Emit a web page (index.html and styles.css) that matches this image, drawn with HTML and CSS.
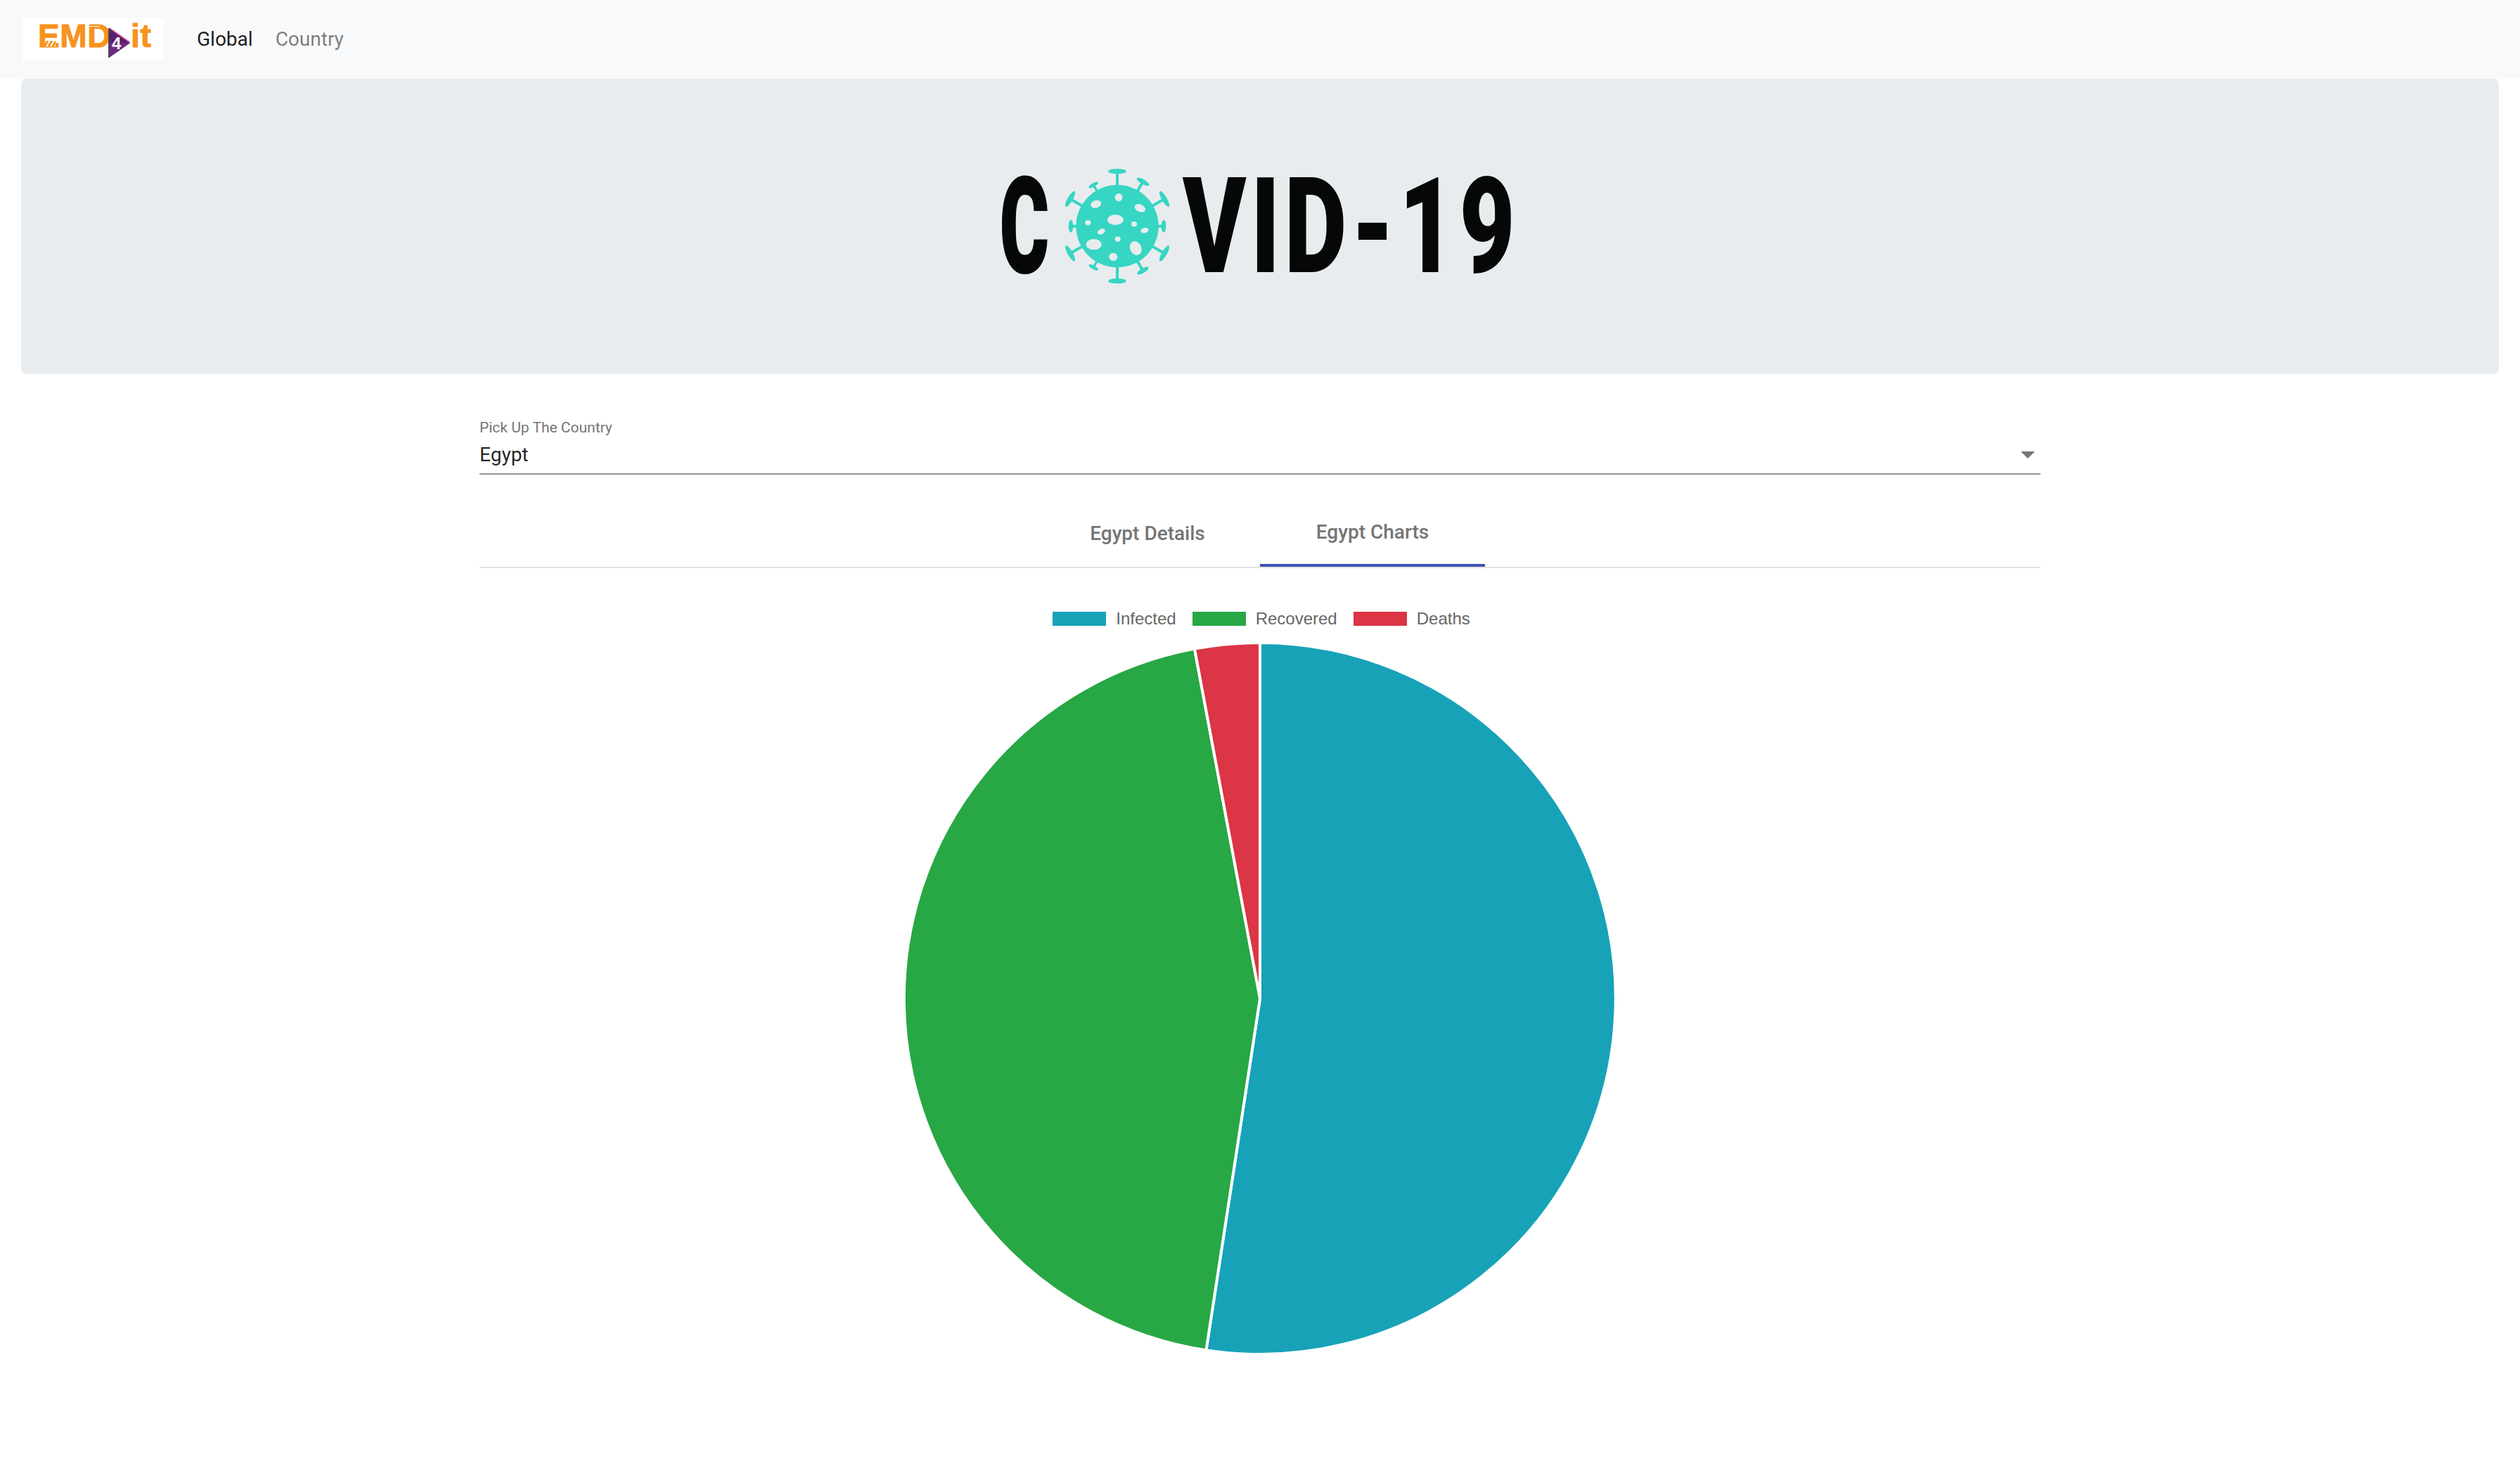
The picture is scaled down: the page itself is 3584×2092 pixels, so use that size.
FILE: index.html
```html
<!DOCTYPE html>
<html lang="en">
<head>
<meta charset="utf-8">
<title>COVID-19</title>
<link rel="stylesheet" href="styles.css">
</head>
<body>
<nav class="navbar">
  <a class="brand">
    <span class="brand-word">EMD</span>
    <svg class="brand-play" viewBox="0 0 32 44">
      <polygon points="1,1 31,22 1,43" fill="#5b1f6d"/>
      <polygon points="1,22 31,22 1,43" fill="#6d2a80"/>
      <line x1="2" y1="1" x2="31" y2="21" stroke="#e05aa0" stroke-width="1.4"/>
      <line x1="1" y1="1" x2="1" y2="43" stroke="#44484c" stroke-width="2"/>
      <text x="5" y="31" class="brand-four">4</text>
    </svg>
    <span class="brand-word">it</span>
    <span class="brand-slashes"></span>
    <span class="brand-streak"></span>
  </a>
  <a class="nav-link nav-active">Global</a>
  <a class="nav-link">Country</a>
</nav>

<header class="jumbotron">
  <div class="covid">
    <span class="covid-text covid-c">C</span>
    <svg class="virus" viewBox="100 60 456 492">
      <g class="virus-fill">
        <circle cx="328" cy="305" r="176"/>
        <g transform="rotate(0 328 305)"><rect x="322" y="75" width="12" height="70"/><ellipse cx="328" cy="71" rx="38" ry="11"/></g>
        <g transform="rotate(30 328 305)"><rect x="322" y="90" width="12" height="60"/><ellipse cx="328" cy="86" rx="30" ry="10"/></g>
        <g transform="rotate(60 328 305)"><rect x="322" y="78" width="12" height="70"/><ellipse cx="328" cy="73" rx="38" ry="11"/></g>
        <g transform="rotate(90 328 305)"><rect x="322" y="110" width="12" height="40"/><ellipse cx="328" cy="107" rx="27" ry="10"/></g>
        <g transform="rotate(120 328 305)"><rect x="322" y="78" width="12" height="70"/><ellipse cx="328" cy="73" rx="38" ry="11"/></g>
        <g transform="rotate(150 328 305)"><rect x="322" y="90" width="12" height="60"/><ellipse cx="328" cy="86" rx="28" ry="10"/></g>
        <g transform="rotate(180 328 305)"><rect x="322" y="75" width="12" height="70"/><ellipse cx="328" cy="71" rx="38" ry="11"/></g>
        <g transform="rotate(210 328 305)"><rect x="323" y="104" width="10" height="50"/><ellipse cx="328" cy="102" rx="23" ry="8"/></g>
        <g transform="rotate(240 328 305)"><rect x="322" y="78" width="12" height="70"/><ellipse cx="328" cy="73" rx="38" ry="11"/></g>
        <g transform="rotate(270 328 305)"><rect x="322" y="110" width="12" height="40"/><ellipse cx="328" cy="107" rx="27" ry="10"/></g>
        <g transform="rotate(300 328 305)"><rect x="322" y="78" width="12" height="70"/><ellipse cx="328" cy="73" rx="38" ry="11"/></g>
        <g transform="rotate(330 328 305)"><rect x="323" y="104" width="10" height="50"/><ellipse cx="328" cy="102" rx="23" ry="8"/></g>
      </g>
      <g class="virus-hole">
        <ellipse cx="334" cy="182" rx="16" ry="17"/>
        <ellipse cx="237" cy="211" rx="23" ry="16" transform="rotate(-15 237 211)"/>
        <ellipse cx="425" cy="228" rx="24" ry="16" transform="rotate(25 425 228)"/>
        <ellipse cx="320" cy="278" rx="34" ry="22"/>
        <ellipse cx="203" cy="290" rx="12" ry="11"/>
        <ellipse cx="400" cy="296" rx="12" ry="11"/>
        <ellipse cx="445" cy="323" rx="17" ry="11" transform="rotate(-15 445 323)"/>
        <ellipse cx="260" cy="328" rx="17" ry="11" transform="rotate(-25 260 328)"/>
        <ellipse cx="330" cy="360" rx="12" ry="11"/>
        <ellipse cx="228" cy="383" rx="33" ry="23"/>
        <ellipse cx="407" cy="399" rx="24" ry="31" transform="rotate(-25 407 399)"/>
        <ellipse cx="311" cy="436" rx="18" ry="17"/>
      </g>
    </svg>
    <span class="covid-text covid-rest">VID-19</span>
  </div>
</header>

<main class="content">
  <div class="field">
    <label class="field-label">Pick Up The Country</label>
    <div class="field-input">
      <span class="field-value">Egypt</span>
      <span class="field-arrow"></span>
    </div>
  </div>

  <div class="tabs">
    <button class="tab">Egypt Details</button>
    <button class="tab tab-active">Egypt Charts</button>
  </div>

  <ul class="legend">
    <li class="legend-item"><span class="swatch swatch-infected"></span>Infected</li>
    <li class="legend-item"><span class="swatch swatch-recovered"></span>Recovered</li>
    <li class="legend-item"><span class="swatch swatch-deaths"></span>Deaths</li>
  </ul>

  <svg class="pie" viewBox="-506 -506 1012 1012">
    <path class="slice slice-infected" d="M0 0 L0 -506 A506 506 0 1 1 -76.6 500.2 Z"/>
    <path class="slice slice-recovered" d="M0 0 L-76.6 500.2 A506 506 0 0 1 -93.1 -497.4 Z"/>
    <path class="slice slice-deaths" d="M0 0 L-93.1 -497.4 A506 506 0 0 1 0 -506 Z"/>
  </svg>
</main>
</body>
</html>
```
FILE: styles.css
```css
* { box-sizing: border-box; }
html, body { margin: 0; padding: 0; background: #fff; }
body { font-family: Roboto, "Liberation Sans", sans-serif; height: 2092px; overflow: hidden; }

.navbar {
  height: 112px;
  background: #f8f9fa;
  display: flex;
  align-items: center;
  padding-left: 32px;
}
.brand {
  position: relative;
  width: 200px;
  height: 60px;
  background: #fff;
  display: flex;
  align-items: flex-start;
  padding: 0 0 0 22px;
  margin-right: 48px;
}
.brand-word {
  font-family: "Liberation Sans", sans-serif;
  font-weight: 700;
  font-size: 46px;
  line-height: 50px;
  height: 50px;
  color: #f7931e;
  -webkit-text-stroke: 1px #f7931e;
  letter-spacing: 0.6px;
}
.brand-play {
  width: 32px;
  height: 44px;
  margin: 13px 0 0 -4px;
  flex: none;
}
.brand-four {
  font-family: "Liberation Sans", sans-serif;
  font-weight: 700;
  font-size: 24px;
  fill: #fff;
}
.brand-slashes {
  position: absolute;
  left: 32px;
  top: 32px;
  width: 15px;
  height: 8px;
  background: repeating-linear-gradient(120deg, #fff 0 2px, #f7931e 2px 5px);
}
.brand-streak {
  position: absolute;
  left: 90px;
  top: 11px;
  width: 20px;
  height: 1px;
  background: #fff;
}
.nav-link {
  font-size: 28px;
  line-height: 40px;
  color: rgba(0, 0, 0, 0.5);
  margin-right: 32px;
}
.nav-active { color: rgba(0, 0, 0, 0.9); }

.jumbotron {
  height: 420px;
  margin: 0 30px;
  background: #e9ecef;
  border-radius: 8px;
  display: flex;
  align-items: center;
  justify-content: center;
}
.covid {
  display: flex;
  align-items: center;
  width: 740px;
  height: 164px;
}
.covid-text {
  font-family: Roboto, sans-serif;
  font-weight: 900;
  font-size: 190px;
  line-height: 164px;
  color: #060808;
  display: block;
  transform-origin: left center;
}
.covid-c { width: 91px; flex: none; transform: scaleX(0.56); -webkit-text-stroke: 2px #060808; }
.covid-rest { flex: none; transform: scaleX(0.72); letter-spacing: 9px; margin-left: 17px; white-space: nowrap; }
.virus { width: 152px; height: 164px; flex: none; }
.virus-fill { fill: #36d6c3; }
.virus-hole { fill: #e9ecef; }

.content {
  width: 2220px;
  margin: 0 auto;
}
.field { padding-top: 64px; }
.field-label {
  display: block;
  font-size: 21px;
  line-height: 24px;
  color: #757575;
  height: 24px;
}
.field-input {
  height: 55px;
  border-bottom: 2px solid #949494;
  display: flex;
  align-items: center;
  justify-content: space-between;
  padding-right: 8px;
}
.field-value {
  font-size: 28px;
  line-height: 40px;
  color: rgba(0, 0, 0, 0.87);
}
.field-arrow {
  width: 0;
  height: 0;
  border-left: 10px solid transparent;
  border-right: 10px solid transparent;
  border-top: 10px solid #757575;
}

.tabs {
  margin-top: 35px;
  height: 98px;
  border-bottom: 2px solid #e0e0e0;
  display: flex;
  justify-content: center;
}
.tab {
  width: 320px;
  height: 96px;
  border: 0;
  background: none;
  padding: 0;
  font-family: Roboto, sans-serif;
  font-weight: 500;
  font-size: 28px;
  color: #757575;
}
.tab-active { border-bottom: 4px solid #3f51b5; }

.legend {
  list-style: none;
  margin: 62px 0 24px;
  padding: 0 0 0 4px;
  display: flex;
  justify-content: center;
  gap: 23px;
  height: 20px;
}
.legend-item {
  display: flex;
  align-items: center;
  gap: 14px;
  font-family: "Liberation Sans", sans-serif;
  font-size: 24px;
  line-height: 20px;
  color: #666;
}
.swatch { width: 76px; height: 20px; display: block; }
.swatch-infected { background: #17a2b8; }
.swatch-recovered { background: #28a745; }
.swatch-deaths { background: #dc3545; }

.pie { display: block; width: 1012px; height: 1012px; margin: 0 auto; }
.slice { stroke: #fff; stroke-width: 4; stroke-linejoin: bevel; }
.slice-infected { fill: #17a2b8; }
.slice-recovered { fill: #28a745; }
.slice-deaths { fill: #dc3545; }
```
